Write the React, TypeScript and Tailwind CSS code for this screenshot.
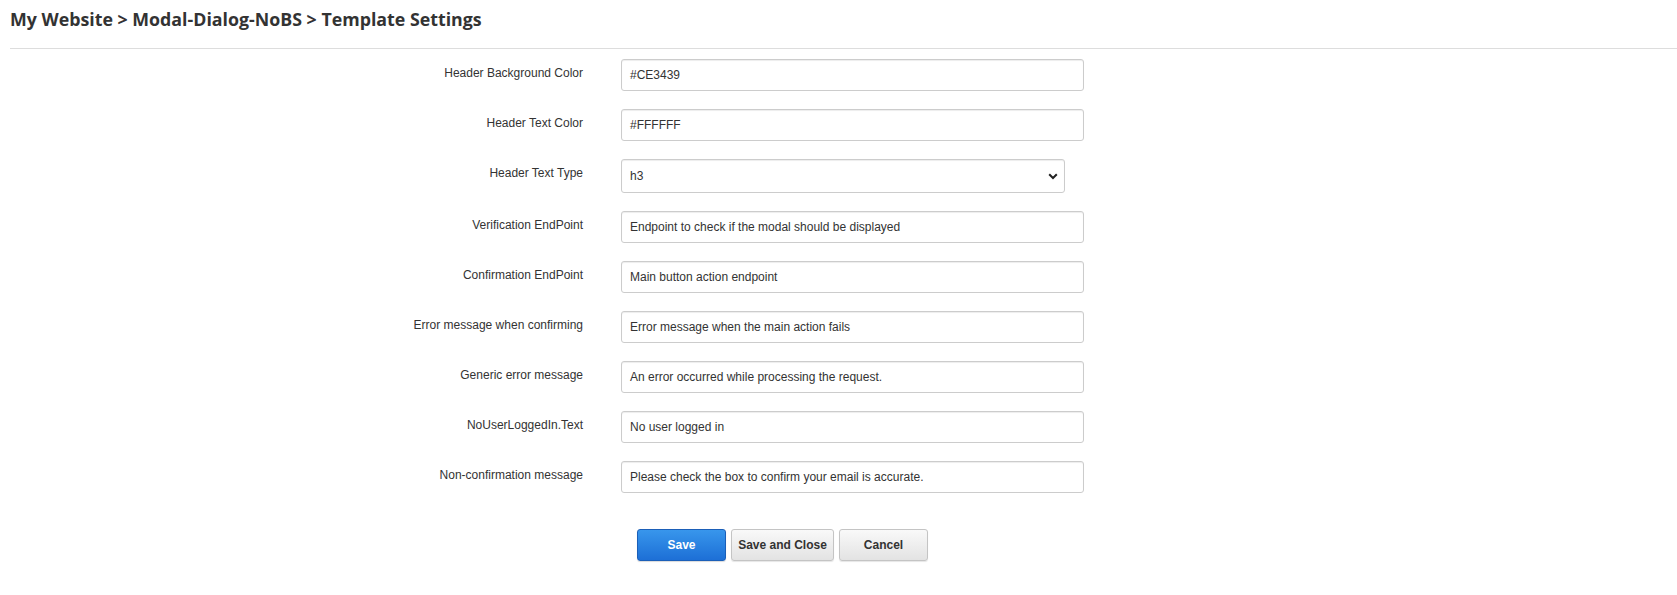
import React from "react";

const rows: { label: string; value: string; select?: boolean }[] = [
  { label: "Header Background Color", value: "#CE3439" },
  { label: "Header Text Color", value: "#FFFFFF" },
  { label: "Header Text Type", value: "h3", select: true },
  { label: "Verification EndPoint", value: "Endpoint to check if the modal should be displayed" },
  { label: "Confirmation EndPoint", value: "Main button action endpoint" },
  { label: "Error message when confirming", value: "Error message when the main action fails" },
  { label: "Generic error message", value: "An error occurred while processing the request." },
  { label: "NoUserLoggedIn.Text", value: "No user logged in" },
  { label: "Non-confirmation message", value: "Please check the box to confirm your email is accurate." },
];

export default function App() {
  return (
    <div className="w-[1677px] h-[595px] bg-white overflow-hidden font-['Liberation_Sans',Arial,sans-serif]">
      <div className="ml-[10px] border-b border-[#dddddd] pt-[7px] pb-[17px]">
        <h1 className="font-['Open_Sans',sans-serif] font-bold text-[17.8px] leading-[24px] text-[#333333] m-0">
          My Website &gt; Modal-Dialog-NoBS &gt; Template Settings
        </h1>
      </div>
      <div className="pt-[10px] pb-[18px]">
        {rows.map((r, i) => (
          <div key={r.label} className={`flex items-start ${i < rows.length - 1 ? "mb-[18px]" : ""}`}>
            <div className="w-[583px] text-right text-[12px] leading-[17px] pt-[6px] text-[#333333]">
              {r.label}
            </div>
            <div className="ml-[38px]">
              {r.select ? (
                <div className="relative w-[444px] h-[34px] border border-[#cccccc] rounded-[3px] bg-white shadow-[inset_0_1px_1px_rgba(0,0,0,0.075)] flex items-center pl-[8px] text-[12px] text-[#333333]">
                  <span>{r.value}</span>
                  <svg
                    className="absolute right-[6px] top-[13px]"
                    width="10"
                    height="7"
                    viewBox="0 0 10 7"
                  >
                    <path d="M1.2 1.2 L5 5 L8.8 1.2" fill="none" stroke="#222" strokeWidth="2" />
                  </svg>
                </div>
              ) : (
                <div className="w-[463px] h-[32px] border border-[#cccccc] rounded-[3px] bg-white shadow-[inset_0_1px_1px_rgba(0,0,0,0.075)] flex items-center pl-[8px] text-[12px] text-[#333333]">
                  {r.value}
                </div>
              )}
            </div>
          </div>
        ))}
      </div>
      <div className="flex ml-[637px] mt-[18px] gap-[5px] text-[12px] font-bold">
        <button className="w-[89px] h-[32px] rounded-[3px] border border-[#1b5fb8] bg-gradient-to-b from-[#3896ec] to-[#1d6fd6] text-white shadow-[0_1px_1px_rgba(0,0,0,0.15)]">
          Save
        </button>
        <button className="w-[103px] h-[32px] rounded-[3px] border border-[#c4c4c4] bg-gradient-to-b from-[#f9f9f9] to-[#e3e3e3] text-[#333333] shadow-[0_1px_1px_rgba(0,0,0,0.1)]">
          Save and Close
        </button>
        <button className="w-[89px] h-[32px] rounded-[3px] border border-[#c4c4c4] bg-gradient-to-b from-[#f9f9f9] to-[#e3e3e3] text-[#333333] shadow-[0_1px_1px_rgba(0,0,0,0.1)]">
          Cancel
        </button>
      </div>
    </div>
  );
}
